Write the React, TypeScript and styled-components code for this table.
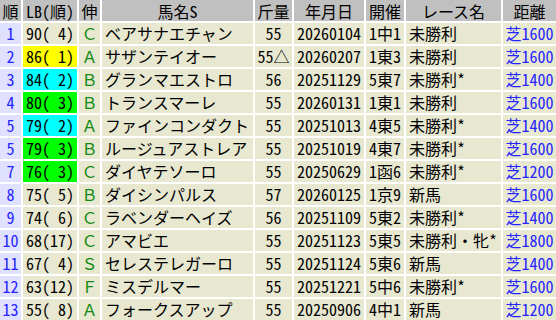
import React from 'react';
import styled, { createGlobalStyle } from 'styled-components';

const GlobalStyle = createGlobalStyle`
  html, body {
    margin: 0;
    padding: 0;
    background: #fff;
  }
  body {
    font-family: "Noto Sans CJK JP", "Liberation Sans", sans-serif;
    font-size: 16px;
    font-feature-settings: "hwid";
    color: #000;
  }
`;

const COLUMNS = '21px 54px 21px 151px 37px 70px 38px 95px 53px';

const Table = styled.div`
  display: flex;
  flex-direction: column;
  gap: 2px;
  width: 556px;
`;

const Row = styled.div`
  display: grid;
  grid-template-columns: ${COLUMNS};
  column-gap: 2px;
  height: 21px;
`;

// header sits on the page's top edge, so keep the text box inside it
const HeadCell = styled.div`
  background: #c0c0c0;
  padding-top: 2px;
  line-height: 19px;
  text-align: center;
  white-space: nowrap;
`;

const Cell = styled.div<{ $align?: 'left' | 'center'; $bg?: string }>`
  background: ${(p) => p.$bg || '#e8e8d0'};
  line-height: 21px;
  text-align: ${(p) => p.$align || 'center'};
  padding-left: ${(p) => (p.$align === 'left' ? '3px' : '0')};
  white-space: pre;
`;

const NumCell = styled(Cell)`
  background: #e0e0ff;
  color: #2424ff;
`;

const GrowthCell = styled(Cell)`
  color: #118a11;
  font-feature-settings: normal;
`;

const DistCell = styled(Cell)`
  color: #2424ff;
`;

type Horse = {
  no: string;
  lb: string;
  mark?: string;
  grow: string;
  name: string;
  weight: string;
  date: string;
  meet: string;
  race: string;
  dist: string;
};

const LB_MARK: Record<string, string> = {
  y: '#ffff00',
  c: '#00ffff',
  g: '#00ff00',
};

const horses: Horse[] = [
  { no: '1', lb: '90( 4)', grow: 'Ｃ', name: 'ベアサナエチャン', weight: '55', date: '20260104', meet: '1中1', race: '未勝利', dist: '芝1600' },
  { no: '2', lb: '86( 1)', mark: 'y', grow: 'Ａ', name: 'サザンテイオー', weight: '55△', date: '20260207', meet: '1東3', race: '未勝利', dist: '芝1600' },
  { no: '3', lb: '84( 2)', mark: 'c', grow: 'Ｂ', name: 'グランマエストロ', weight: '56', date: '20251129', meet: '5東7', race: '未勝利*', dist: '芝1400' },
  { no: '4', lb: '80( 3)', mark: 'g', grow: 'Ｂ', name: 'トランスマーレ', weight: '55', date: '20260131', meet: '1東1', race: '未勝利', dist: '芝1600' },
  { no: '5', lb: '79( 2)', mark: 'c', grow: 'Ａ', name: 'ファインコンダクト', weight: '55', date: '20251013', meet: '4東5', race: '未勝利*', dist: '芝1400' },
  { no: '5', lb: '79( 3)', mark: 'g', grow: 'Ｂ', name: 'ルージュアストレア', weight: '55', date: '20251019', meet: '4東7', race: '未勝利*', dist: '芝1600' },
  { no: '7', lb: '76( 3)', mark: 'g', grow: 'Ｃ', name: 'ダイヤテソーロ', weight: '55', date: '20250629', meet: '1函6', race: '未勝利*', dist: '芝1200' },
  { no: '8', lb: '75( 5)', grow: 'Ｂ', name: 'ダイシンパルス', weight: '57', date: '20260125', meet: '1京9', race: '新馬', dist: '芝1600' },
  { no: '9', lb: '74( 6)', grow: 'Ｃ', name: 'ラベンダーヘイズ', weight: '56', date: '20251109', meet: '5東2', race: '未勝利*', dist: '芝1400' },
  { no: '10', lb: '68(17)', grow: 'Ｃ', name: 'アマビエ', weight: '55', date: '20251123', meet: '5東5', race: '未勝利・牝*', dist: '芝1800' },
  { no: '11', lb: '67( 4)', grow: 'Ｓ', name: 'セレステレガーロ', weight: '55', date: '20251124', meet: '5東6', race: '新馬', dist: '芝1400' },
  { no: '12', lb: '63(12)', grow: 'Ｆ', name: 'ミスデルマー', weight: '55', date: '20251221', meet: '5中6', race: '未勝利*', dist: '芝1600' },
  { no: '13', lb: '55( 8)', grow: 'Ａ', name: 'フォークスアップ', weight: '55', date: '20250906', meet: '4中1', race: '新馬', dist: '芝1200' },
];

const headers = ['順', 'LB(順)', '伸', '馬名S', '斤量', '年月日', '開催', 'レース名', '距離'];

function App() {
  return (
    <>
      <GlobalStyle />
      <Table>
        <Row>
          {headers.map((h) => (
            <HeadCell key={h}>{h}</HeadCell>
          ))}
        </Row>
        {horses.map((h) => (
          <Row key={h.name}>
            <NumCell>{h.no}</NumCell>
            <Cell $bg={h.mark ? LB_MARK[h.mark] : undefined}>{h.lb}</Cell>
            <GrowthCell>{h.grow}</GrowthCell>
            <Cell $align="left">{h.name}</Cell>
            <Cell>{h.weight}</Cell>
            <Cell>{h.date}</Cell>
            <Cell>{h.meet}</Cell>
            <Cell $align="left">{h.race}</Cell>
            <DistCell>{h.dist}</DistCell>
          </Row>
        ))}
      </Table>
    </>
  );
}

export default App;
